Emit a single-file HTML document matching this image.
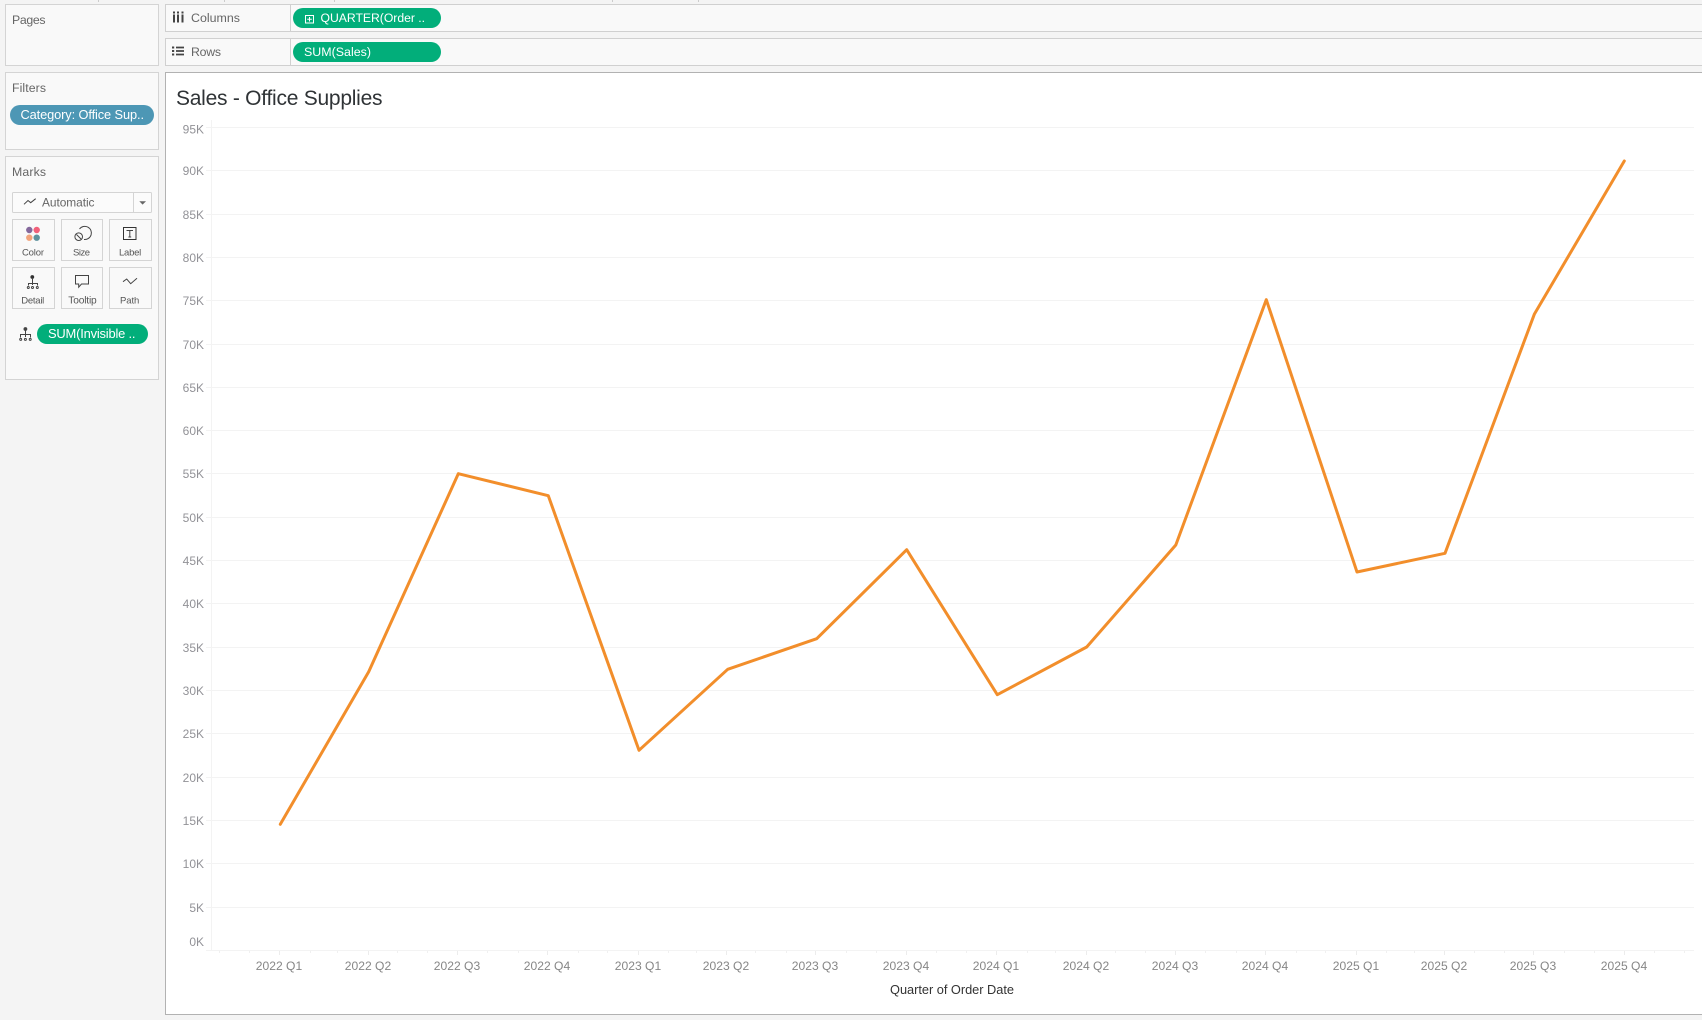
<!DOCTYPE html>
<html lang="en">
<head>
<meta charset="utf-8">
<title>Sales - Office Supplies</title>
<style>
html,body{margin:0;padding:0;width:1702px;height:1020px;overflow:hidden;background:#f4f4f4}
svg{display:block;position:absolute;left:0;top:0}
text{font-family:"Liberation Sans",sans-serif}
.p{font-size:12.3px;fill:#666}
.w{font-size:12.3px;fill:#fff}
.b{font-size:9.5px;fill:#555}
.y{font-size:12px;fill:#929297;text-anchor:end}
.x{font-size:12.1px;fill:#868686;text-anchor:middle}
.i{fill:none;stroke:#444;stroke-width:1}
</style>
</head>
<body>
<svg width="1702" height="1020" viewBox="0 0 1702 1020" xmlns="http://www.w3.org/2000/svg">
<rect width="1702" height="1020" fill="#f4f4f4"/>
<path d="M98.5 0v2M224.5 0v2M334.5 0v2M612.5 0v2M698.5 0v2" stroke="#ccc" stroke-width="1"/>

<!-- Left cards -->
<rect x="5.5" y="4.5" width="153" height="61" fill="#f9f9f9" stroke="#d4d4d4"/>
<rect x="5.5" y="72.5" width="153" height="77" fill="#f9f9f9" stroke="#d4d4d4"/>
<rect x="5.5" y="156.5" width="153" height="223" fill="#f9f9f9" stroke="#d4d4d4"/>
<text class="p" x="12" y="24" textLength="33.5">Pages</text>
<text class="p" x="12" y="92" textLength="34">Filters</text>
<text class="p" x="12" y="176" textLength="34">Marks</text>

<rect x="10" y="105" width="144" height="20" rx="10" fill="#4d97b5"/>
<text class="w" style="font-size:12.8px" x="20.5" y="119" textLength="123.5">Category: Office Sup..</text>

<!-- Marks dropdown -->
<rect x="12.5" y="192.5" width="139" height="20" rx="1" fill="#fbfbfb" stroke="#d4d4d4"/>
<path d="M133.5 193v19" stroke="#d4d4d4"/>
<path d="M24 204.3L28 200.5L30.7 202.7L35.7 198.7" class="i"/>
<text class="p" style="font-size:11.9px" x="42" y="206.5" textLength="52.5">Automatic</text>
<path d="M139.3 201.2H146L142.6 204.6Z" fill="#666"/>

<!-- Marks buttons -->
<g fill="#f9f9f9" stroke="#d4d4d4">
<rect x="12.5" y="219.5" width="42" height="41"/>
<rect x="61.5" y="219.5" width="41" height="41"/>
<rect x="109.5" y="219.5" width="42" height="41"/>
<rect x="12.5" y="267.5" width="42" height="41"/>
<rect x="61.5" y="267.5" width="41" height="41"/>
<rect x="109.5" y="267.5" width="42" height="41"/>
</g>
<circle cx="29.3" cy="230" r="3.2" fill="#84689c"/>
<circle cx="36.7" cy="230" r="3.2" fill="#f2607a"/>
<circle cx="29.3" cy="237.7" r="3.2" fill="#f2a47c"/>
<circle cx="36.7" cy="237.7" r="3.2" fill="#5f929e"/>

<path d="M79.5 229A6.6 6.6 0 1 1 84 239.5" class="i"/>
<circle cx="78.7" cy="236.7" r="3.8" class="i"/>
<path d="M76.5 234.5L81 239" class="i"/>

<rect x="123.5" y="227.5" width="12.5" height="12" class="i" style="stroke:#333"/>
<path d="M126.5 230.5H133M129.8 230.5V237M128.4 237H131.2" class="i"/>

<circle cx="32.3" cy="277" r="1.9" fill="#333"/>
<path d="M32.5 278V285M28.5 285.5V283.5H37.5V285.5" class="i"/>
<g class="i"><circle cx="28.3" cy="287.5" r="1"/><circle cx="32.5" cy="287.5" r="1"/><circle cx="37.3" cy="287.5" r="1"/></g>

<path d="M75.5 275.5H88.5V284H81.5L78.7 287.2V284H75.5Z" class="i"/>
<path d="M123 281.7L126.7 279L130.7 283.7L137 278.3" class="i"/>
<text class="b" x="22" y="255.5" textLength="22">Color</text>
<text class="b" x="73" y="255.5" textLength="17">Size</text>
<text class="b" x="119" y="255.5" textLength="22.3">Label</text>
<text class="b" x="21.3" y="303.5" textLength="23">Detail</text>
<text class="b" style="font-size:10.2px" x="68.3" y="303.5" textLength="28.4">Tooltip</text>
<text class="b" x="120" y="303.5" textLength="19.3">Path</text>

<!-- Marks pill -->
<circle cx="25.4" cy="329" r="1.9" fill="#444"/>
<path d="M25.5 330V337M20.5 337.5V334.5H30.5V337.5" class="i"/>
<circle cx="20.7" cy="339.4" r="1" class="i"/><circle cx="25.4" cy="339.4" r="1" class="i"/><circle cx="30.2" cy="339.4" r="1" class="i"/>
<rect x="37" y="324" width="111" height="20" rx="10" fill="#02ae7a"/>
<text class="w" style="font-size:12.9px" x="48" y="338" textLength="87.5">SUM(Invisible ..</text>

<!-- Shelves -->
<rect x="165.5" y="4.5" width="1540" height="27" fill="#f9f9f9" stroke="#d0d0d0"/>
<rect x="165.5" y="38.5" width="1540" height="27" fill="#f9f9f9" stroke="#d0d0d0"/>
<path d="M290.5 5v26M290.5 39v26" stroke="#d0d0d0"/>
<path d="M173 11.5h2v2h-2zM177 11.5h2v2h-2zM181.5 11.5h2v2h-2z" fill="#444"/>
<path d="M174 14.5v8M178 14.5v8M182.5 14.5v8" stroke="#444" stroke-width="2"/>
<path d="M172 46.5h2.2v2H172zM172 50h2.2v2H172zM172 53.5h2.2v2H172z" fill="#444"/>
<path d="M176 47.5h8M176 51h8M176 54.5h8" stroke="#444" stroke-width="1.8"/>
<text class="p" style="font-size:12.4px" x="191" y="22" textLength="49">Columns</text>
<text class="p" x="191" y="56" textLength="30">Rows</text>

<rect x="293" y="8" width="148" height="20" rx="10" fill="#02ae7a"/>
<rect x="293" y="42" width="148" height="20" rx="10" fill="#02ae7a"/>
<rect x="305.5" y="15.5" width="8" height="7.5" fill="none" stroke="#fff"/>
<path d="M309.5 17v4.5M307.2 19.2h4.6" stroke="#fff" fill="none"/>
<text class="w" style="font-size:12.2px" x="320.5" y="22" textLength="104.5">QUARTER(Order ..</text>
<text class="w" style="font-size:12.4px" x="304" y="56" textLength="67">SUM(Sales)</text>

<!-- View -->
<rect x="165.5" y="72.5" width="1540" height="942" fill="#fff" stroke="#b2b2b2"/>
<text x="176" y="105" font-size="21" fill="#2f3336" textLength="206.5">Sales - Office Supplies</text>

<!-- Grid -->
<path d="M206 127.5H1694M206 170.5H1694M206 214.5H1694M206 257.5H1694M206 300.5H1694M206 344.5H1694M206 387.5H1694M206 430.5H1694M206 473.5H1694M206 517.5H1694M206 560.5H1694M206 603.5H1694M206 647.5H1694M206 690.5H1694M206 733.5H1694M206 777.5H1694M206 820.5H1694M206 863.5H1694M206 907.5H1694M206 950.5H1694" stroke="#f3f3f3"/>
<path d="M211.5 120V950" stroke="#f3f3f3"/>
<path d="M279.5 951v4M368.5 951v4M457.5 951v4M547.5 951v4M638.5 951v4M726.5 951v4M815.5 951v4M906.5 951v4M996.5 951v4M1086.5 951v4M1175.5 951v4M1265.5 951v4M1356.5 951v4M1444.5 951v4M1533.5 951v4M1624.5 951v4" stroke="#ececec"/>
<path d="M219.5 951v2M249.5 951v2M310.5 951v2M337.5 951v2M397.5 951v2M427.5 951v2M487.5 951v2M518.5 951v2M578.5 951v2M607.5 951v2M668.5 951v2M696.5 951v2M755.5 951v2M786.5 951v2M846.5 951v2M876.5 951v2M936.5 951v2M966.5 951v2M1027.5 951v2M1055.5 951v2M1115.5 951v2M1145.5 951v2M1205.5 951v2M1236.5 951v2M1296.5 951v2M1325.5 951v2M1386.5 951v2M1414.5 951v2M1474.5 951v2M1504.5 951v2M1564.5 951v2M1594.5 951v2M1654.5 951v2M1684.5 951v2" stroke="#f0f0f0"/>

<!-- Y labels -->
<text class="y" x="204" y="133.5">95K</text>
<text class="y" x="204" y="175">90K</text>
<text class="y" x="204" y="219">85K</text>
<text class="y" x="204" y="262">80K</text>
<text class="y" x="204" y="305">75K</text>
<text class="y" x="204" y="349">70K</text>
<text class="y" x="204" y="392">65K</text>
<text class="y" x="204" y="435">60K</text>
<text class="y" x="204" y="478">55K</text>
<text class="y" x="204" y="522">50K</text>
<text class="y" x="204" y="565">45K</text>
<text class="y" x="204" y="608">40K</text>
<text class="y" x="204" y="652">35K</text>
<text class="y" x="204" y="695">30K</text>
<text class="y" x="204" y="738">25K</text>
<text class="y" x="204" y="782">20K</text>
<text class="y" x="204" y="825">15K</text>
<text class="y" x="204" y="868">10K</text>
<text class="y" x="204" y="912">5K</text>
<text class="y" x="204" y="946">0K</text>

<!-- X labels -->
<text class="x" x="279" y="970">2022 Q1</text>
<text class="x" x="368" y="970">2022 Q2</text>
<text class="x" x="457" y="970">2022 Q3</text>
<text class="x" x="547" y="970">2022 Q4</text>
<text class="x" x="638" y="970">2023 Q1</text>
<text class="x" x="726" y="970">2023 Q2</text>
<text class="x" x="815" y="970">2023 Q3</text>
<text class="x" x="906" y="970">2023 Q4</text>
<text class="x" x="996" y="970">2024 Q1</text>
<text class="x" x="1086" y="970">2024 Q2</text>
<text class="x" x="1175" y="970">2024 Q3</text>
<text class="x" x="1265" y="970">2024 Q4</text>
<text class="x" x="1356" y="970">2025 Q1</text>
<text class="x" x="1444" y="970">2025 Q2</text>
<text class="x" x="1533" y="970">2025 Q3</text>
<text class="x" x="1624" y="970">2025 Q4</text>
<text x="890" y="994" font-size="12.8" fill="#333" textLength="124">Quarter of Order Date</text>

<!-- Line -->
<polyline fill="none" stroke="#f28e2b" stroke-width="3" stroke-linejoin="round" stroke-linecap="round" points="280.3,824.3 368.7,671.7 458.3,473.7 548.3,495.7 639,750.3 727.7,669.3 816.7,638.7 906.7,549.7 997.3,694.7 1086.7,647 1175.8,545 1266.3,299.7 1357,572 1445,553.3 1534.3,314.3 1624.3,161"/>
</svg>
</body>
</html>
